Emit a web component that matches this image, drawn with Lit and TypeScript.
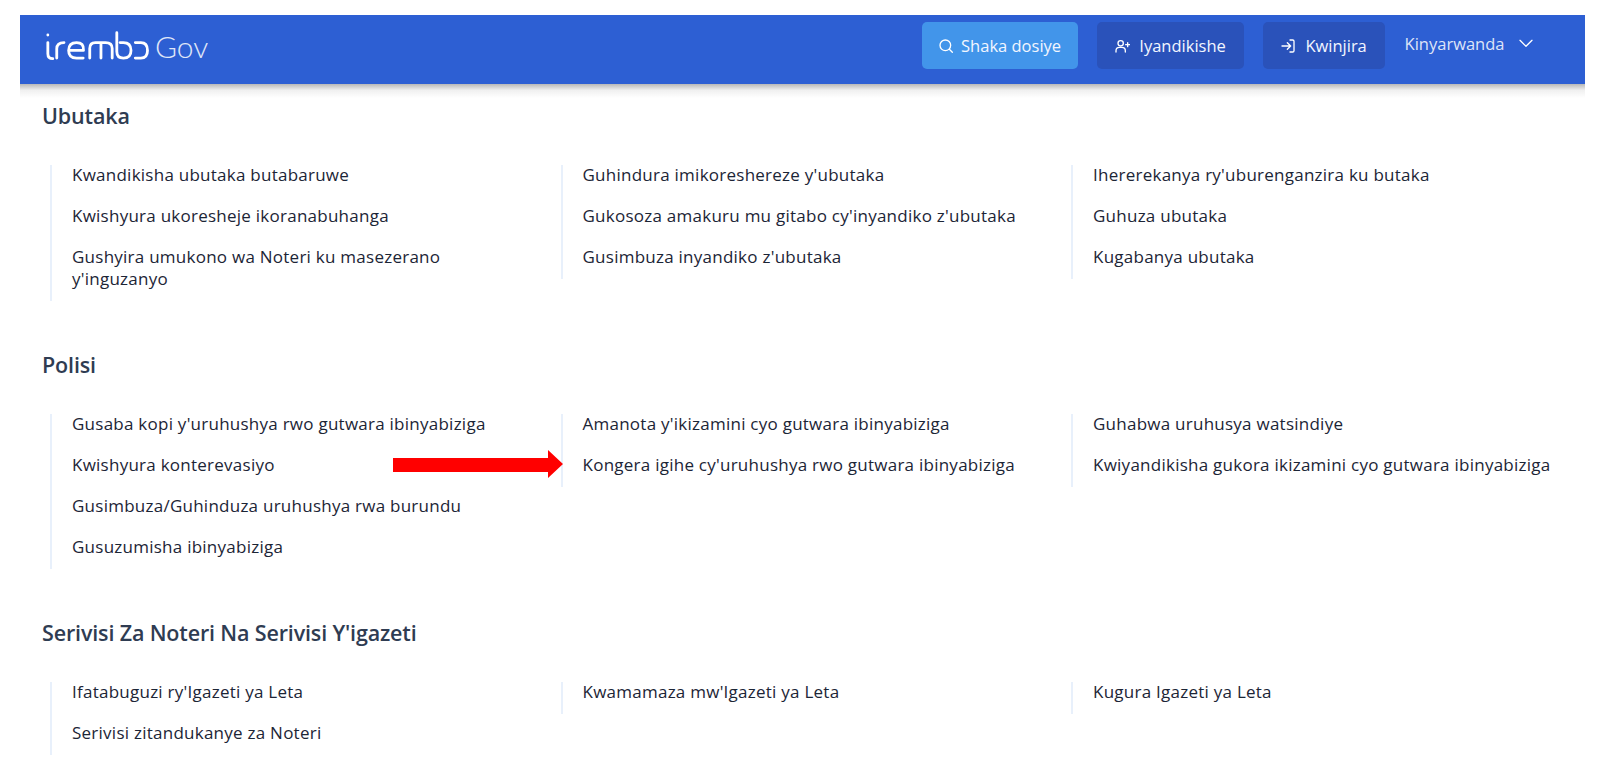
import { LitElement, html, css } from "lit";
import { customElement } from "lit/decorators.js";

const sections = [
  { title: "Ubutaka", cols: [
    ["Kwandikisha ubutaka butabaruwe", "Kwishyura ukoresheje ikoranabuhanga", "Gushyira umukono wa Noteri ku masezerano y'inguzanyo"],
    ["Guhindura imikoreshereze y'ubutaka", "Gukosoza amakuru mu gitabo cy'inyandiko z'ubutaka", "Gusimbuza inyandiko z'ubutaka"],
    ["Ihererekanya ry'uburenganzira ku butaka", "Guhuza ubutaka", "Kugabanya ubutaka"],
  ]},
  { title: "Polisi", cols: [
    ["Gusaba kopi y'uruhushya rwo gutwara ibinyabiziga", "Kwishyura konterevasiyo", "Gusimbuza/Guhinduza uruhushya rwa burundu", "Gusuzumisha ibinyabiziga"],
    ["Amanota y'ikizamini cyo gutwara ibinyabiziga", "Kongera igihe cy'uruhushya rwo gutwara ibinyabiziga"],
    ["Guhabwa uruhusya watsindiye", "Kwiyandikisha gukora ikizamini cyo gutwara ibinyabiziga"],
  ]},
  { title: "Serivisi Za Noteri Na Serivisi Y'igazeti", cols: [
    ["Ifatabuguzi ry'Igazeti ya Leta", "Serivisi zitandukanye za Noteri"],
    ["Kwamamaza mw'Igazeti ya Leta"],
    ["Kugura Igazeti ya Leta"],
  ]},
];

@customElement("app-root")
export class AppRoot extends LitElement {
  static styles = css`
    :host { display: block; height: 779px; overflow: hidden; background: #fff; font-family: "Open Sans", "Noto Sans", sans-serif; color: #1c2536; position: relative; }
    .header { margin: 15px 15px 0 20px; height: 69px; box-sizing: border-box; background: #2d5fd3; display: flex; align-items: center; padding: 0 51.5px 8px 23px; color: #fff; position: relative; }
    .header::after { content: ""; position: absolute; left: 0; right: 0; top: 100%; height: 14px; background: linear-gradient(rgba(0,0,0,.28), rgba(0,0,0,.06) 45%, transparent); }
    .logo { display: flex; align-items: center; gap: 2px; }
    .logo svg { width: 110px; height: 33px; fill: none; stroke: #fff; stroke-width: 8.5; stroke-linecap: round; stroke-linejoin: round; }
    .gov { font-family: "Lato", sans-serif; font-size: 30px; font-weight: 300; opacity: .85; line-height: 1; }
    .spacer { flex: 1; }
    .btn { display: flex; align-items: center; justify-content: center; gap: 7px; height: 47px; border-radius: 5px; background: #2a52ba; font-size: 16.5px; margin-right: 19px; font-weight: 500; box-sizing: border-box; color: #f2f6ff; }
    .btn.primary { background: #4295ea; width: 156px; }
    .btn.reg { width: 147px; gap: 9px; }
    .btn.login { width: 122px; gap: 9px; margin-right: 20px; }
    .lang { display: flex; align-items: center; gap: 13px; font-size: 16.5px; margin-top: -5px; color: rgba(255,255,255,.85); }
    svg.i { width: 16px; height: 16px; fill: none; stroke: #fff; stroke-width: 2; stroke-linecap: round; stroke-linejoin: round; flex: none; }
    .main { padding: 19px 0 0 42px; display: flex; flex-direction: column; gap: 51px; }
    h2 { margin: 0; font-size: 21.5px; line-height: 26px; font-weight: 600; color: #2f3c52; letter-spacing: -.15px; }
    .grid { display: grid; grid-template-columns: repeat(3, 510.5px); margin: 36px 0 0 8px; }
    .col { border-left: 2px solid #e8f0fb; padding: 0 0 11px 20px; align-self: start; display: flex; flex-direction: column; gap: 19px; }
    .item { font-size: 17px; letter-spacing: .25px; line-height: 22px; color: #1c2536; max-width: 465px; }
    .item:first-child { margin-top: -1px; }
    .arrow { position: absolute; left: 393px; top: 450px; width: 170px; height: 28px; }
  `;
  render() {
    return html`
      <div class="header">
        <div class="logo">
          <svg viewBox="40 25 330 100" role="img" aria-label="irembo">
            <path d="M53 43v.1M53 66V100Q53 115 68 115" />
            <path d="M80 113V85Q80 66 102 66" />
            <path d="M118 90H161Q163 66 140 66Q116 66 116 90Q116 113 140 113H160" />
            <path d="M180 113V84Q180 66 197 66H228Q248 66 248 84V113M214 66V113" />
            <path d="M262 36V93Q262 113 282 113Q305 113 305 90Q305 66 282 66H272" />
            <path d="M318 66H335Q355 66 355 90Q355 113 335 113H318" />
          </svg>
          <span class="gov">Gov</span>
        </div>
        <div class="spacer"></div>
        <div class="btn primary"><svg class="i" viewBox="0 0 24 24"><circle cx="11" cy="11" r="8"/><path d="M17 17l4.5 4.5"/></svg>Shaka dosiye</div>
        <div class="btn reg"><svg class="i" viewBox="0 0 24 24"><circle cx="10" cy="8" r="4"/><path d="M3 21v-2a5 5 0 0 1 5-5h4a5 5 0 0 1 5 5v2M20.5 7v6M17.5 10h6"/></svg>Iyandikishe</div>
        <div class="btn login"><svg class="i" viewBox="0 0 24 24"><path d="M15 3h4a2 2 0 0 1 2 2v14a2 2 0 0 1-2 2h-4M3 12h13M11 7l5 5-5 5"/></svg>Kwinjira</div>
        <div class="lang">Kinyarwanda <svg class="i" viewBox="0 0 24 24"><path d="M3 8l9 9 9-9"/></svg></div>
      </div>
      <div class="main">
        ${sections.map(s => html`
          <div class="section">
            <h2>${s.title}</h2>
            <div class="grid">
              ${s.cols.map(c => html`<div class="col">${c.map(t => html`<div class="item">${t}</div>`)}</div>`)}
            </div>
          </div>`)}
      </div>
      <svg class="arrow" viewBox="0 0 170 28"><path d="M0 8H155V0L170 14 155 28V22H0Z" fill="#ff0000"/></svg>
    `;
  }
}
